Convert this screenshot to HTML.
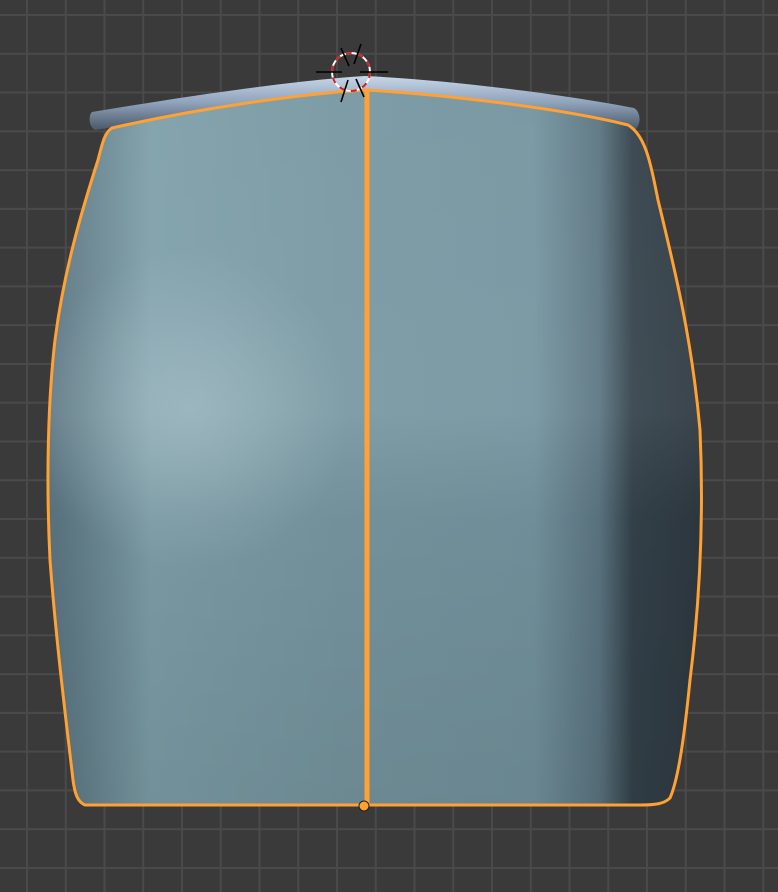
<!DOCTYPE html>
<html><head><style>
html,body{margin:0;padding:0;background:#3a3a3a;}
svg{display:block}
</style></head><body>
<svg width="778" height="892" viewBox="0 0 778 892" xmlns="http://www.w3.org/2000/svg">
<defs>
<pattern id="g" x="26" y="14" width="38.75" height="38.77" patternUnits="userSpaceOnUse">
<rect x="0" y="0" width="2" height="38.77" fill="#4a4a4a"/>
<rect x="0" y="0" width="38.75" height="2" fill="#4a4a4a"/>
</pattern>
<linearGradient id="h" x1="45" y1="0" x2="705" y2="0" gradientUnits="userSpaceOnUse">
<stop offset="0" stop-color="#5a7480"/>
<stop offset="0.06" stop-color="#66838e"/>
<stop offset="0.16" stop-color="#7fa0aa"/>
<stop offset="0.45" stop-color="#7898a2"/>
<stop offset="0.74" stop-color="#7595a0"/>
<stop offset="0.84" stop-color="#5c7682"/>
<stop offset="0.89" stop-color="#35434c"/>
<stop offset="1" stop-color="#2e3840"/>
</linearGradient>
<linearGradient id="v" x1="0" y1="85" x2="0" y2="810" gradientUnits="userSpaceOnUse">
<stop offset="0" stop-color="#ffffff" stop-opacity="0.04"/>
<stop offset="0.45" stop-color="#ffffff" stop-opacity="0.06"/>
<stop offset="0.6" stop-color="#000000" stop-opacity="0.05"/>
<stop offset="1" stop-color="#000000" stop-opacity="0.1"/>
</linearGradient>
<radialGradient id="r" cx="190" cy="410" r="160" gradientUnits="userSpaceOnUse">
<stop offset="0" stop-color="#b8ccd4" stop-opacity="0.45"/>
<stop offset="1" stop-color="#b8ccd4" stop-opacity="0"/>
</radialGradient>
<linearGradient id="bar" x1="0" y1="0" x2="0" y2="1">
<stop offset="0" stop-color="#c8d6e8"/>
<stop offset="0.5" stop-color="#8ea2ba"/>
<stop offset="1" stop-color="#4a5868"/>
</linearGradient>
<clipPath id="c"><path d="M112,128 C200,108 300,94 365,90 C440,94 560,108 628,125 C645,135 650,160 658,200 C675,270 692,340 700,430 C704,520 700,600 690,680 C684,740 678,780 670,798 C664,804 655,805 640,805 L85,805 C78,802 75,795 73,780 C66,720 56,640 50,560 C46,480 48,400 55,340 C64,270 82,210 98,160 C102,145 104,133 112,128 Z"/></clipPath>
</defs>
<rect width="778" height="892" fill="#3a3a3a"/>
<rect width="778" height="892" fill="url(#g)"/>
<path d="M92,112 C200,94 300,80 365,76 C450,80 560,94 634,108 C641,112 641,124 636,129 L610,126 C540,110 440,98 365,96 C300,98 200,110 120,126 L95,130 C89,127 88,116 92,112 Z" fill="url(#bar)"/>
<g clip-path="url(#c)">
<rect x="45" y="85" width="660" height="725" fill="url(#h)"/>
<rect x="45" y="85" width="660" height="725" fill="url(#v)"/>
<rect x="45" y="85" width="660" height="725" fill="url(#r)"/>
</g>
<path d="M112,128 C200,108 300,94 365,90 C440,94 560,108 628,125 C645,135 650,160 658,200 C675,270 692,340 700,430 C704,520 700,600 690,680 C684,740 678,780 670,798 C664,804 655,805 640,805 L85,805 C78,802 75,795 73,780 C66,720 56,640 50,560 C46,480 48,400 55,340 C64,270 82,210 98,160 C102,145 104,133 112,128 Z" fill="none" stroke="#ffa133" stroke-width="3"/>
<line x1="367" y1="90" x2="367" y2="805" stroke="#ffa133" stroke-width="5"/>
<circle cx="364" cy="806" r="5" fill="#ffa133" stroke="#222" stroke-width="1"/>
<circle cx="351" cy="72" r="19" fill="none" stroke="#ffffff" stroke-width="2"/>
<circle cx="351" cy="72" r="19" fill="none" stroke="#d32020" stroke-width="2" stroke-dasharray="6 6"/>
<g stroke="#000" stroke-width="1.6">
<line x1="316" y1="72" x2="342" y2="72"/><line x1="360" y1="72" x2="388" y2="72"/>
<line x1="341" y1="48" x2="349" y2="66"/><line x1="361" y1="44" x2="354" y2="64"/>
<line x1="348" y1="80" x2="341" y2="102"/><line x1="356" y1="79" x2="364" y2="97"/>
</g>
</svg>
</body></html>
